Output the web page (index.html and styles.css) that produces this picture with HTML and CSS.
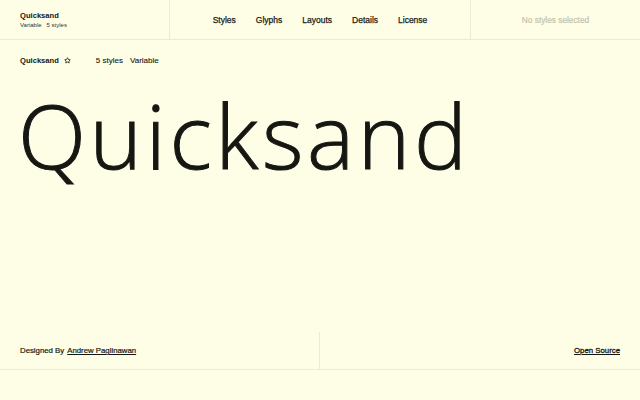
FILE: index.html
```html
<!DOCTYPE html>
<html lang="en">
<head>
    <meta charset="UTF-8">
    <meta name="viewport" content="width=device-width, initial-scale=1.0">
    <title>Quicksand</title>
    <link rel="stylesheet" href="styles.css">
</head>
<body>
<header class="topbar">
    <div class="brand">
        <div class="brand-name">Quicksand</div>
        <div class="brand-sub"><span>Variable</span><span>5 styles</span></div>
    </div>
    <nav class="nav">
        <a href="#">Styles</a>
        <a href="#">Glyphs</a>
        <a href="#">Layouts</a>
        <a href="#">Details</a>
        <a href="#">License</a>
    </nav>
    <div class="status">No styles selected</div>
</header>

<div class="meta">
    <span class="meta-name">Quicksand</span>
    <svg class="star" width="7" height="7" viewBox="0 0 24 24">
        <path d="M12 2.5l2.9 6.1 6.6.8-4.9 4.6 1.3 6.6L12 17.3l-5.9 3.3 1.3-6.6-4.9-4.6 6.6-.8z" fill="none" stroke="#222" stroke-width="2.8" stroke-linejoin="round"/>
    </svg>
    <span class="meta-info">5 styles</span>
    <span class="meta-info">Variable</span>
</div>

<section class="hero">
    <h1>Quicksand</h1>
</section>

<footer class="footer">
    <div class="credit">Designed By <a href="#">Andrew Paglinawan</a></div>
    <div class="source"><a href="#">Open Source</a></div>
</footer>
</body>
</html>
```

FILE: styles.css
```css
body {
    margin: 0;
    background: #fefee6;
    color: #161612;
    font-family: "Liberation Sans", Arial, sans-serif;
}
a {
    color: inherit;
}
.topbar {
    display: flex;
    height: 39px;
    border-bottom: 1px solid #ebebd2;
}
.brand {
    width: 149px;
    padding-left: 20px;
    border-right: 1px solid #ebebd2;
    display: flex;
    flex-direction: column;
    justify-content: center;
}
.brand-name {
    font-size: 7.6px;
    font-weight: 700;
    line-height: 10px;
}
.brand-sub {
    font-size: 6px;
    line-height: 8px;
    color: #333;
}
.brand-sub span {
    margin-right: 5px;
}
.nav {
    flex: 1;
    display: flex;
    justify-content: center;
    align-items: center;
    gap: 20px;
}
.nav a {
    text-decoration: none;
    font-size: 8.5px;
    color: #1a1a16;
    -webkit-text-stroke: 0.25px #1a1a16;
}
.status {
    width: 169px;
    border-left: 1px solid #ebebd2;
    display: flex;
    align-items: center;
    justify-content: center;
    font-size: 8.3px;
    color: #c4c4ad;
    -webkit-text-stroke: 0.2px #c4c4ad;
}
.meta {
    display: flex;
    align-items: center;
    height: 40px;
    padding: 0 20px;
    font-size: 8px;
}
.meta-name {
    font-size: 7.6px;
    font-weight: 700;
}
.star {
    margin: 0 25px 0 5px;
}
.meta-info {
    margin-right: 7px;
    -webkit-text-stroke: 0.1px #161612;
}
.hero {
    height: 252px;
    padding-left: 18px;
}
.hero h1 {
    margin: 0;
    padding-top: 5px;
    font-family: "Open Sans", sans-serif;
    font-weight: 300;
    font-size: 89px;
    line-height: 100px;
    letter-spacing: 3.6px;
    -webkit-text-stroke: 1px #161612;
}
.footer {
    display: flex;
    height: 37px;
    border-bottom: 1px solid #ebebd2;
    font-size: 7.8px;
}
.credit {
    width: 299px;
    padding-left: 20px;
    border-right: 1px solid #ebebd2;
    display: flex;
    align-items: center;
    gap: 3px;
    -webkit-text-stroke: 0.2px #161612;
}
.source {
    flex: 1;
    display: flex;
    align-items: center;
    justify-content: flex-end;
    padding-right: 20px;
    -webkit-text-stroke: 0.3px #161612;
}
```
